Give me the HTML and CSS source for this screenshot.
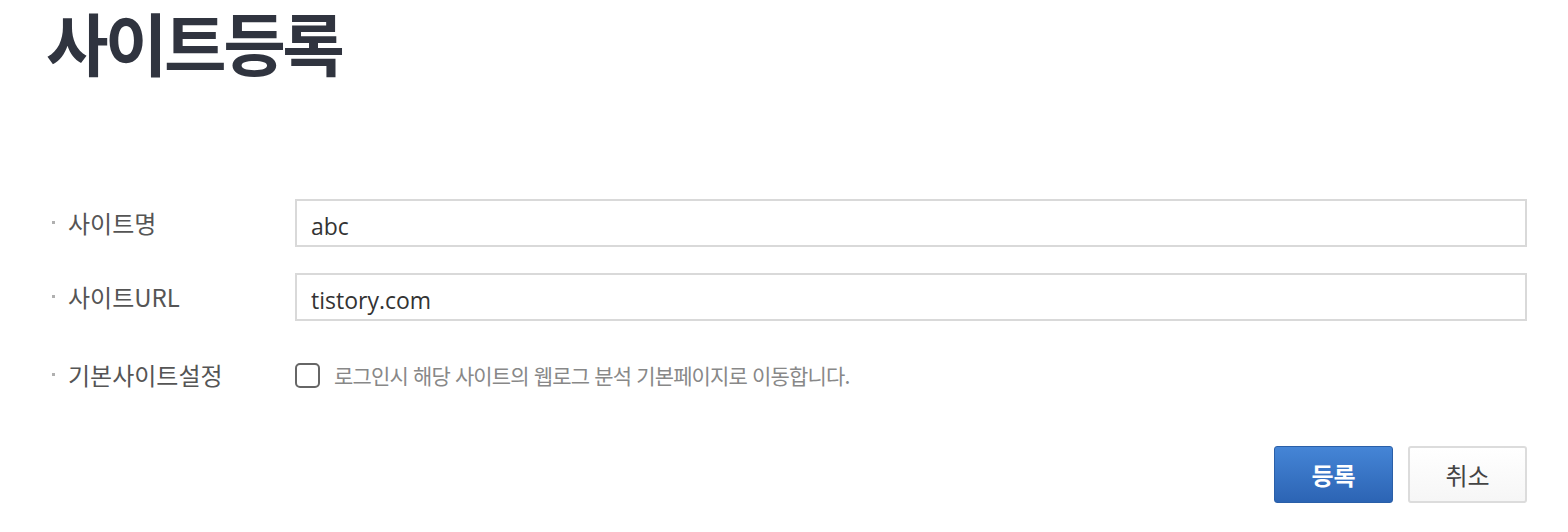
FILE: index.html
```html
<!DOCTYPE html>
<html lang="ko">
<head>
<meta charset="utf-8">
<title>사이트등록</title>
<link rel="stylesheet" href="styles.css">
</head>
<body>
<div class="page">
  <header class="header">
    <h1 class="title">사이트등록</h1>
  </header>
  <form class="form">
    <div class="row">
      <label class="label"><span class="dot"></span>사이트명</label>
      <div class="field"><input class="input" type="text" value="abc"></div>
    </div>
    <div class="row">
      <label class="label"><span class="dot"></span>사이트URL</label>
      <div class="field"><input class="input" type="text" value="tistory.com"></div>
    </div>
    <div class="row row-check">
      <label class="label"><span class="dot"></span>기본사이트설정</label>
      <div class="field check-field">
        <span class="checkbox"></span>
        <span class="check-text">로그인시 해당 사이트의 웹로그 분석 기본페이지로 이동합니다.</span>
      </div>
    </div>
    <div class="actions">
      <button type="button" class="btn btn-primary">등록</button>
      <button type="button" class="btn btn-default">취소</button>
    </div>
  </form>
</div>
</body>
</html>
```

FILE: styles.css
```css
* { box-sizing: border-box; }
html, body { margin: 0; padding: 0; background: #fff; }
body {
  font-family: "Noto Sans CJK KR", "Noto Sans", sans-serif;
  color: #333;
}
.page {
  width: 1568px;
  padding: 0 41px 0 46px;
}
.header {
  display: flow-root;
  height: 140px;
}
.title {
  margin: 0;
  font-size: 68px;
  line-height: 84px;
  font-weight: 700;
  color: #30343f;
  letter-spacing: -3.5px;
}
.form { padding-top: 59px; }
.row {
  display: grid;
  grid-template-columns: 249px 1fr;
  align-items: center;
  height: 48px;
  margin-bottom: 26px;
}
.row-check { margin-top: 4px; margin-bottom: 0; height: 56px; }
.label {
  display: flex;
  align-items: center;
  font-size: 24px;
  color: #555;
  padding-bottom: 2px;
}
.dot {
  width: 3px;
  height: 3px;
  background: #b0b0b0;
  margin: 0 13px 0 6px;
}
.input {
  width: 100%;
  height: 48px;
  border: 2px solid #d9d9d9;
  padding: 5px 14px 0;
  font-family: "Open Sans", "Noto Sans", sans-serif;
  font-size: 23px;
  color: #333;
  outline: none;
}
.check-field { display: flex; align-items: center; }
.checkbox {
  width: 25px;
  height: 25px;
  border: 2px solid #666;
  border-radius: 5px;
  margin-right: 14px;
  flex: none;
}
.check-text {
  font-size: 21px;
  color: #888;
  letter-spacing: -0.85px;
}
.actions {
  display: flex;
  justify-content: flex-end;
  gap: 15px;
  margin-top: 43px;
}
.btn {
  width: 119px;
  height: 57px;
  font-family: "Noto Sans CJK KR", sans-serif;
  font-size: 24px;
  border-radius: 3px;
  cursor: pointer;
}
.btn-primary {
  background: linear-gradient(#4585d6, #2c64b4);
  border: 1px solid #2a5fa8;
  color: #fff;
  font-weight: 700;
}
.btn-default {
  background: linear-gradient(#fff, #f6f6f6);
  border: 2px solid #dcdcdc;
  color: #444;
}
```
